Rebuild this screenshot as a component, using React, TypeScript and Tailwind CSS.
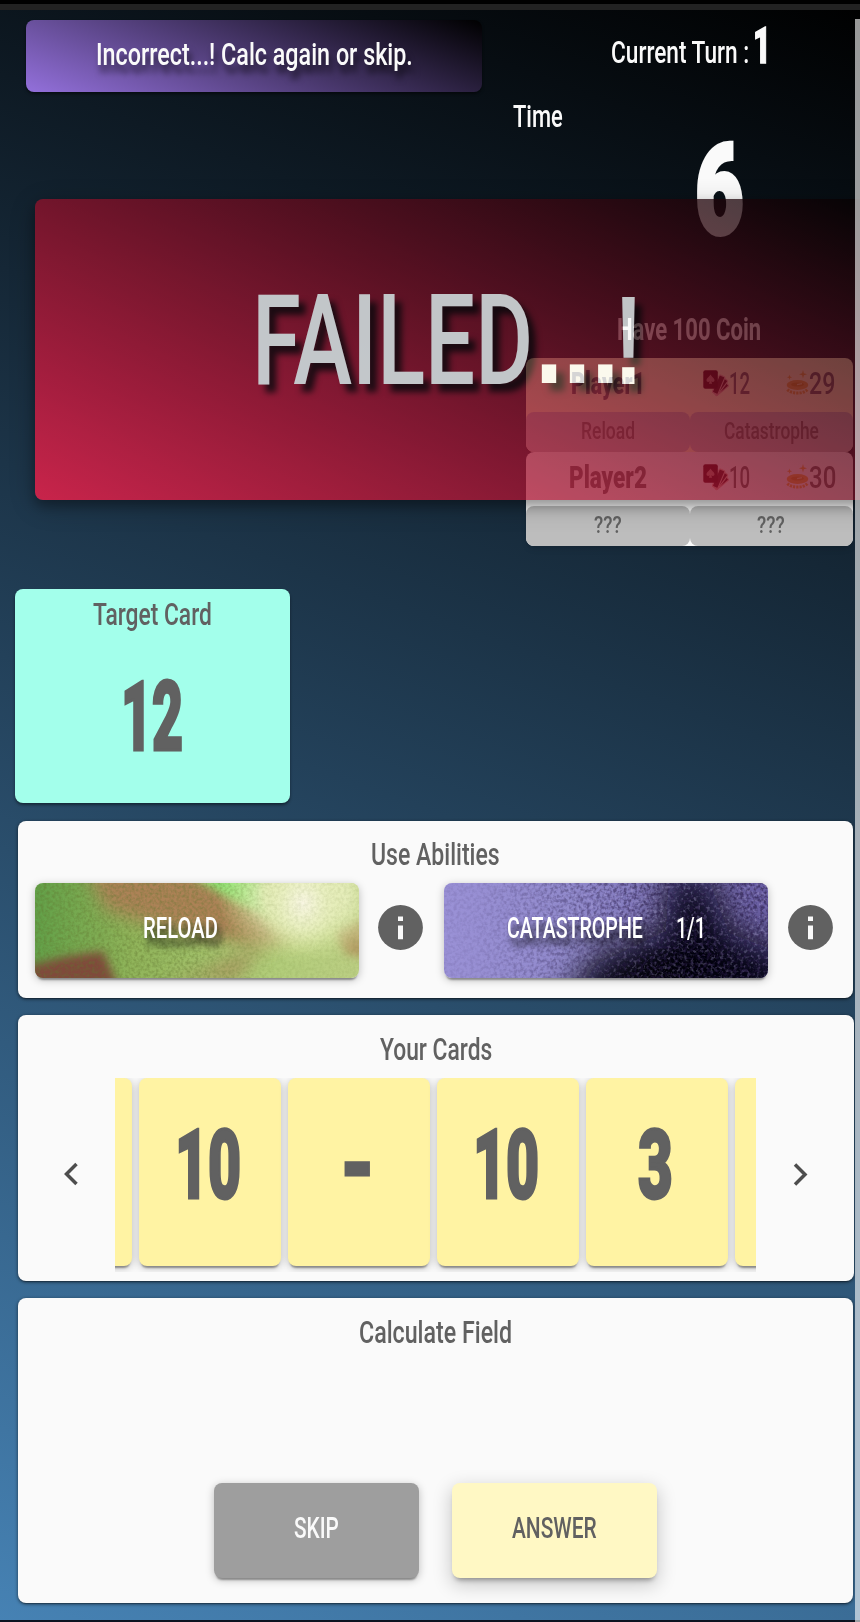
import { useLayoutEffect, useRef, useState } from "react";
import type { ReactNode } from "react";

type FitProps = { w: number; className?: string; children: ReactNode };

/** Condensed label: squeezes its text horizontally so that it is exactly `w` wide. */
function Fit({ w, className = "", children }: FitProps) {
  const ref = useRef<HTMLSpanElement>(null);
  const [scale, setScale] = useState(0.6);
  useLayoutEffect(() => {
    if (ref.current && ref.current.offsetWidth > 0) setScale(w / ref.current.offsetWidth);
  }, [w, children]);
  return (
    <span className={`block shrink-0 leading-none whitespace-nowrap ${className}`} style={{ width: w }}>
      <span ref={ref} className="inline-block origin-left" style={{ transform: `scaleX(${scale})` }}>
        {children}
      </span>
    </span>
  );
}

function CardsIcon() {
  return (
    <svg width="26" height="25" viewBox="0 0 26 25" className="shrink-0 overflow-visible">
      <g fill="#5a0c1c" stroke="#e9a9a4" strokeWidth="1.100">
        <rect x="9" y="7" width="6" height="16" rx="1" transform="rotate(50 11 23)" />
        <rect x="9" y="5" width="6" height="18" rx="1" transform="rotate(37 11 23)" />
        <rect x="9" y="4" width="6" height="19" rx="1" transform="rotate(23 11 23)" />
      </g>
      <rect x="0.300" y="0.300" width="14.500" height="18.500" rx="2" fill="#4d0010" />
      <path d="M7.500 4.500c1 2.400 4 3.400 4 5.800 0 1.800-2 2.200-3.200 1l.8 2.400H5.900l.8-2.400c-1.200 1.200-3.200.8-3.200-1 0-2.400 3-3.400 4-5.800z" fill="#c07a7a" />
    </svg>
  );
}

function CoinIcon() {
  return (
    <svg width="23" height="25" viewBox="0 0 23 25" className="shrink-0" fill="#eeb040">
      <path d="M17 0l.9 3.300 3.100 1-3.100 1-.9 3.300-.9-3.300-3.100-1 3.100-1zM3.500 4.500l.6 2 2 .7-2 .7-.6 2-.6-2-2-.7 2-.7z" />
      <ellipse cx="11.500" cy="15" rx="10.800" ry="5" />
      <ellipse cx="11.500" cy="14.500" rx="6.500" ry="2" fill="#d8961e" />
      <path d="M11 14.700l5-1" stroke="#ffd98a" strokeWidth="1.200" />
      <path d="M1.500 19.500c4 4.800 16 4.800 20 0" fill="none" stroke="#eeb040" strokeWidth="3" strokeDasharray="2.200 1" />
    </svg>
  );
}

function PlayerRow(props: {
  name: string;
  nameW: number;
  cards: string;
  coins: string;
  cardsW: number;
  coinsW: number;
  skills: [string, string];
  skillsW: [number, number];
  tone: string;
}) {
  return (
    <div className={`h-[94px] rounded-lg text-[#616161] shadow-md ${props.tone}`}>
      <div className="flex h-[54px] items-start pt-[9px]">
        <div className="flex w-[177px] justify-center pr-[14px]">
          <Fit w={props.nameW} className="text-[32px] font-black">{props.name}</Fit>
        </div>
        <div className="flex w-[83px] items-start">
          <span className="mt-[3px]"><CardsIcon /></span>
          <Fit w={props.cardsW} className="text-[32px] font-medium">{props.cards}</Fit>
        </div>
        <div className="flex items-start">
          <span className="mt-[3px]"><CoinIcon /></span>
          <Fit w={props.coinsW} className="text-[32px] font-medium">{props.coins}</Fit>
        </div>
      </div>
      <div className="flex h-10">
        {props.skills.map((s, i) => (
          <div key={i} className="flex flex-1 justify-center rounded-lg bg-[#bdbdbd] pt-[8px]">
            <Fit w={props.skillsW[i]} className="text-[23px] font-medium">{s}</Fit>
          </div>
        ))}
      </div>
    </div>
  );
}

function InfoIcon() {
  return (
    <svg width="45" height="45" viewBox="0 0 45 45" className="shrink-0">
      <circle cx="22.500" cy="22.500" r="22.400" fill="#616161" />
      <path d="M20 11.500h5v4.600h-5zM20 20.500h5v13.700h-5z" fill="#fafafa" />
    </svg>
  );
}

function ReloadArt() {
  return (
    <svg className="absolute inset-0" width="324" height="95" viewBox="0 0 324 95">
      <defs>
        <linearGradient id="leaf" x1="0" x2="1">
          <stop offset="0" stopColor="#62a048" />
          <stop offset="0.3" stopColor="#90b45a" />
          <stop offset="0.7" stopColor="#b0cc78" />
          <stop offset="1" stopColor="#bccf84" />
        </linearGradient>
        <radialGradient id="sun">
          <stop offset="0" stopColor="#f8f6e2" />
          <stop offset="0.45" stopColor="#eaf0c2" stopOpacity="0.95" />
          <stop offset="1" stopColor="#d4e496" stopOpacity="0" />
        </radialGradient>
        <filter id="soft" x="-30%" y="-30%" width="160%" height="160%"><feGaussianBlur stdDeviation="9" /></filter>
        <filter id="soft2" x="-30%" y="-30%" width="160%" height="160%"><feGaussianBlur stdDeviation="5" /></filter>
        <filter id="grainA">
          <feTurbulence type="fractalNoise" baseFrequency="0.33" numOctaves="2" seed="4" />
          <feColorMatrix values="0 0 0 0 0.12  0 0 0 0 0.18  0 0 0 0 0.03  2.4 0 0 0 -0.9" />
          <feGaussianBlur stdDeviation="0.5" />
        </filter>
        <linearGradient id="leafFade" x1="0" x2="1">
          <stop offset="0.5" stopColor="#fff" />
          <stop offset="0.75" stopColor="#444" />
        </linearGradient>
        <mask id="leafMask"><rect width="324" height="95" fill="url(#leafFade)" /></mask>
      </defs>
      <rect width="324" height="95" fill="url(#leaf)" />
      <path d="M50 -15 L160 -15 L265 50 L225 62 L130 46 L70 26Z" fill="#ac8256" filter="url(#soft)" />
      <path d="M155 -8 L225 -8 L240 34 L200 18 Z" fill="#90e676" filter="url(#soft2)" />
      <path d="M-10 84 L28 74 L68 68 L84 105 L-10 105Z" fill="#804a3a" filter="url(#soft2)" />
      <path d="M130 98 L165 90 L230 62 L200 96Z" fill="#a8945e" filter="url(#soft)" />
      <path d="M300 48 L330 35 L330 75 L310 70Z" fill="#b39a62" filter="url(#soft2)" />
      <ellipse cx="270" cy="14" rx="88" ry="66" fill="url(#sun)" />
      <ellipse cx="268" cy="20" rx="46" ry="52" fill="url(#sun)" />
      <g mask="url(#leafMask)"><rect width="324" height="95" filter="url(#grainA)" opacity="0.42" /></g>
    </svg>
  );
}

function CatastropheArt() {
  return (
    <svg className="absolute inset-0" width="324" height="95" viewBox="0 0 324 95">
      <defs>
        <linearGradient id="dusk" x1="0" x2="1">
          <stop offset="0" stopColor="#9a91d6" />
          <stop offset="0.4" stopColor="#9089cb" />
          <stop offset="0.7" stopColor="#7a70b4" />
          <stop offset="1" stopColor="#6a5fa4" />
        </linearGradient>
        <filter id="smoke" x="-60%" y="-60%" width="220%" height="220%"><feGaussianBlur stdDeviation="18" /></filter>
        <filter id="grainB">
          <feTurbulence type="fractalNoise" baseFrequency="0.3" numOctaves="2" seed="9" />
          <feColorMatrix values="0 0 0 0 0.02  0 0 0 0 0.01  0 0 0 0 0.06  3 0 0 0 -1.2" />
          <feGaussianBlur stdDeviation="0.5" />
        </filter>
        <filter id="grainC">
          <feTurbulence type="fractalNoise" baseFrequency="0.3" numOctaves="2" seed="21" />
          <feColorMatrix values="0 0 0 0 0.45  0 0 0 0 0.4  0 0 0 0 0.7  4 0 0 0 -2" />
        </filter>
        <linearGradient id="grainFade" x1="0" x2="1">
          <stop offset="0.1" stopColor="#2a2a2a" />
          <stop offset="0.65" stopColor="#fff" />
        </linearGradient>
        <mask id="grainMask"><rect width="324" height="95" fill="url(#grainFade)" /></mask>
      </defs>
      <rect width="324" height="95" fill="url(#dusk)" />
      <path d="M225 -10 L262 -10 L285 50 L350 75 L350 125 L115 125 L155 80 L222 48Z" fill="#06030f" filter="url(#smoke)" />
      <ellipse cx="205" cy="92" rx="62" ry="12" fill="#030108" filter="url(#smoke)" />
      <g mask="url(#grainMask)">
        <rect width="324" height="95" filter="url(#grainC)" opacity="0.35" />
        <rect width="324" height="95" filter="url(#grainB)" opacity="0.6" />
      </g>
    </svg>
  );
}

const panel =
  "rounded-lg bg-[#fafafa] shadow-[0_2px_1px_-1px_rgba(0,0,0,0.3),0_1px_3px_1px_rgba(0,0,0,0.35)]";
const raised =
  "shadow-[0_4px_2px_-2px_rgba(0,0,0,0.35),0_2px_8px_rgba(0,0,0,0.25)]";

const hand: { text: string; w: number }[] = [
  { text: "", w: 10 },
  { text: "10", w: 66 },
  { text: "-", w: 35 },
  { text: "10", w: 66 },
  { text: "3", w: 35 },
  { text: "", w: 10 },
];

export default function App() {
  return (
    <div className="relative flex h-[1622px] w-[860px] flex-col overflow-hidden bg-[linear-gradient(20deg,#4682b4,#000)] font-['Roboto',sans-serif] text-[#616161]">
      <div className="h-[4px] shrink-0 bg-black" />
      <div className="h-[6px] shrink-0 bg-[#222]" />

      <div className="flex h-[579px] shrink-0">
        <div className="w-[482px] pt-[10px] pl-[26px]">
          <div className="flex h-[72px] w-[456px] justify-center rounded-lg bg-[linear-gradient(22deg,#9370db,#000)] pt-[18px] text-[#fafafa] shadow-[0_2px_3px_rgba(0,0,0,0.5)]">
            <Fit w={317} className="text-[32px] font-medium [text-shadow:4px_8px_8px_rgba(0,0,0,0.6)]">
              Incorrect...! Calc again or skip.
            </Fit>
          </div>
        </div>
        <div className="flex w-[378px] flex-col pt-[11px] text-[#fafafa]">
          <div className="flex h-[51px] items-start pl-[129px]">
            <Fit w={138} className="mt-[15px] text-[32px] font-medium">Current Turn :</Fit>
            <Fit w={18} className="ml-[4px] text-[50px] font-black [-webkit-text-stroke:1.5px_#fafafa]">1</Fit>
          </div>
          <Fit w={50} className="mt-[28px] ml-[31px] text-[32px] font-medium">Time</Fit>
          <Fit w={49} className="-mt-[5px] ml-[213px] text-[127px] font-black [-webkit-text-stroke:4px_#fafafa]">6</Fit>
          <Fit w={144} className="mt-[59px] ml-[135px] text-[32px] font-bold">Have 100 Coin</Fit>
          <div className="mt-[13px] ml-[44px] flex w-[327px] flex-col">
            <PlayerRow
              name="Player1" nameW={74} cards="12" coins="29" cardsW={21} coinsW={26}
              skills={["Reload", "Catastrophe"]} skillsW={[54, 95]}
              tone="bg-[#fff9c4]"
            />
            <PlayerRow
              name="Player2" nameW={78} cards="10" coins="30" cardsW={21} coinsW={27}
              skills={["???", "???"]} skillsW={[28, 28]}
              tone="bg-[#fafafa]"
            />
          </div>
        </div>
      </div>

      <div className="ml-[14.5px] flex h-[214px] w-[275.5px] shrink-0 flex-col items-center rounded-lg bg-[#a3ffeb] pt-[9px] shadow-[0_2px_3px_rgba(0,0,0,0.45)]">
        <Fit w={119} className="text-[32px] font-medium">Target Card</Fit>
        <Fit w={62} className="mt-[39px] text-[96px] font-black [-webkit-text-stroke:3px_#616161]">12</Fit>
      </div>

      <div className={`mt-[18px] ml-[18px] flex h-[177px] w-[835px] shrink-0 flex-col ${panel}`}>
        <div className="flex h-[62px] justify-center pt-[17px]">
          <Fit w={129} className="text-[32px] font-medium">Use Abilities</Fit>
        </div>
        <div className="flex items-center pl-[17px] text-white">
          <div className={`relative flex h-[95px] w-[324px] justify-center overflow-hidden rounded-lg pt-[30px] pr-[34px] ${raised}`}>
            <ReloadArt />
            <Fit w={75} className="relative text-[30px] font-medium [text-shadow:6px_8px_8px_rgba(0,0,0,0.75)]">RELOAD</Fit>
          </div>
          <div className="mb-[6px] ml-[19px]"><InfoIcon /></div>
          <div className={`relative ml-[21px] flex h-[95px] w-[324px] overflow-hidden rounded-lg pt-[30px] pl-[63px] ${raised}`}>
            <CatastropheArt />
            <Fit w={136} className="relative text-[30px] font-medium [text-shadow:6px_8px_8px_rgba(0,0,0,0.75)]">CATASTROPHE</Fit>
            <Fit w={30} className="relative ml-[33px] text-[30px] font-medium">1/1</Fit>
          </div>
          <div className="mb-[6px] ml-[20px]"><InfoIcon /></div>
        </div>
      </div>

      <div className={`mt-[17px] ml-[18px] flex h-[266px] w-[836px] shrink-0 flex-col ${panel}`}>
        <div className="flex h-[62.5px] justify-center pt-[18px]">
          <Fit w={112} className="text-[32px] font-medium">Your Cards</Fit>
        </div>
        <div className="flex h-[194px]">
          <div className="flex w-[97px] justify-end pt-[84px] pr-[36px]">
            <svg width="16" height="24" viewBox="0 0 16 24" fill="none" stroke="#4d4d4d" strokeWidth="3.500">
              <path d="M13.500 2L3.500 12l10 10" />
            </svg>
          </div>
          <div className="flex w-[641px] shrink-0 gap-[6.5px] overflow-hidden">
            {hand.map((c, i) => (
              <div
                key={i}
                className={`flex h-[188px] w-[142.5px] shrink-0 justify-center rounded-lg bg-[#fff3a3] pt-[39px] pr-[3px] ${raised} ${i === 0 ? "-ml-[125.5px]" : ""}`}
              >
                <Fit w={c.w} className="text-[96px] font-black [-webkit-text-stroke:3px_#616161]">{c.text}</Fit>
              </div>
            ))}
          </div>
          <div className="pt-[84px] pl-[36px]">
            <svg width="16" height="24" viewBox="0 0 16 24" fill="none" stroke="#4d4d4d" strokeWidth="3.500">
              <path d="M3 2.500l10 10-10 10" />
            </svg>
          </div>
        </div>
      </div>

      <div className={`mt-[17px] ml-[18px] flex h-[305px] w-[835px] shrink-0 flex-col items-center ${panel}`}>
        <Fit w={153} className="mt-[18px] text-[32px] font-medium">Calculate Field</Fit>
        <div className="mt-[135px] flex gap-[33px]">
          <div className={`flex h-[95px] w-[205px] justify-center rounded-lg bg-[#9e9e9e] pt-[30px] text-[#fafafa] ${raised}`}>
            <Fit w={45} className="text-[30px] font-medium">SKIP</Fit>
          </div>
          <div className="flex h-[95px] w-[205px] justify-center rounded-lg bg-[#fff8c4] pt-[30px] shadow-[0_5px_5px_-3px_rgba(0,0,0,0.35),0_6px_18px_2px_rgba(0,0,0,0.18)]">
            <Fit w={85} className="text-[30px] font-medium">ANSWER</Fit>
          </div>
        </div>
      </div>

      <div className="absolute top-[1620px] left-0 h-[2px] w-full bg-[#0c1320]" />

      <div className="absolute top-[199px] left-[35px] flex h-[301px] w-[860px] items-start rounded-lg bg-[linear-gradient(25deg,#ff1f4c,#000)] pt-[79px] pl-[217px] text-[#fafafa] opacity-[0.76] shadow-[0_6px_12px_rgba(0,0,0,0.4),0_6px_28px_rgba(0,0,0,0.3)] [text-shadow:10px_8px_8px_rgba(0,0,0,0.8)]">
        <Fit w={281} className="text-[126px] font-medium">FAILED</Fit>
        <Fit w={84} className="ml-[2px] font-['Liberation_Sans',sans-serif] text-[124px] font-bold">...</Fit>
        <Fit w={29} className="-ml-[5px] font-['Liberation_Sans',sans-serif] text-[126px] font-bold">!</Fit>
      </div>

      <div className="absolute top-[19px] right-0 h-[1603px] w-[5px] bg-white/60" />
    </div>
  );
}
